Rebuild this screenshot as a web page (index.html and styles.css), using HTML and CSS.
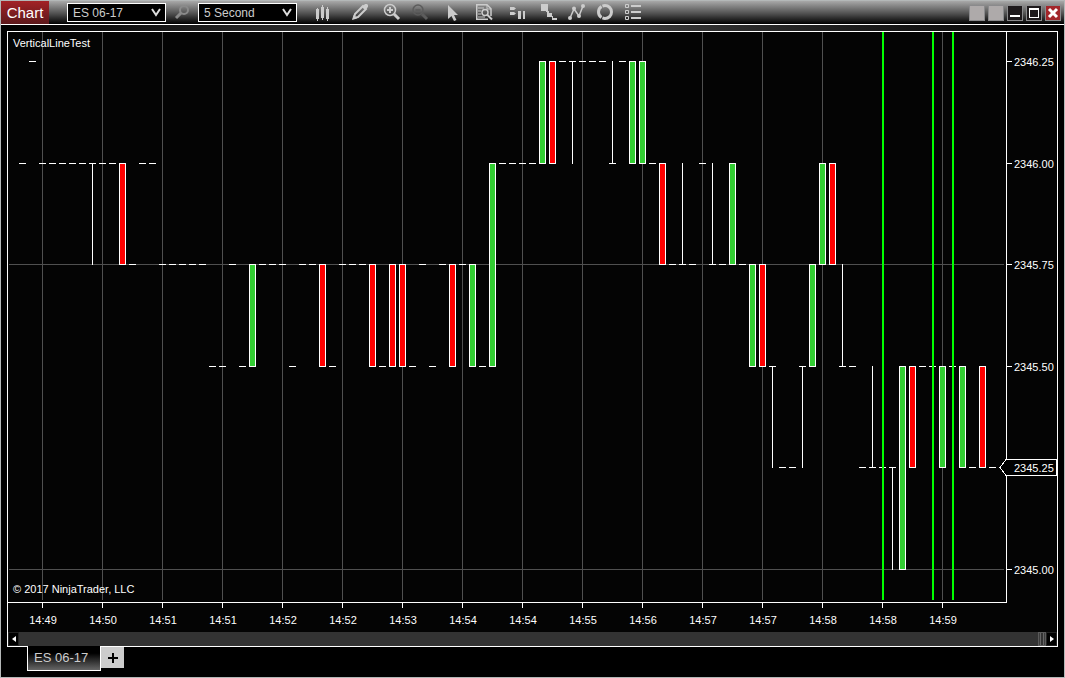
FILE: index.html
```html
<!DOCTYPE html>
<html lang="en">
<head>
    <meta charset="UTF-8">
    <meta name="viewport" content="width=device-width, initial-scale=1.0">
    <title>Chart</title>
    <link rel="stylesheet" href="styles.css">
</head>
<body>
<div class="window">
    <header class="titlebar">
        <h1 class="title">Chart</h1>
        <div class="pickers">
            <div class="picker">
                <select aria-label="Instrument">
                    <option>ES 06-17</option>
                </select>
                <svg class="chevron" viewBox="0 0 10 9"><path d="M1 1l4 6 4-6"/></svg>
            </div>
            <button class="search" aria-label="Search instrument">
                <svg viewBox="0 0 16 15"><circle cx="10" cy="5" r="4"/><path d="M7 8l-5 5" stroke-width="3"/></svg>
            </button>
            <div class="picker">
                <select aria-label="Interval">
                    <option>5 Second</option>
                </select>
                <svg class="chevron" viewBox="0 0 10 9"><path d="M1 1l4 6 4-6"/></svg>
            </div>
        </div>
        <nav class="toolbar">
            <button class="tool tool-style" aria-label="Chart style">
                <svg viewBox="0 0 18 18"><path class="solid" d="M3 6h1V5h1v1h1v10H5v2H4v-2H3zM8 4h1V2h1v2h1v11h-1v2H9v-2H8zM13 6h1V4h1v2h1v10h-1v2h-1v-2h-1z"/></svg>
            </button>
            <button class="tool" aria-label="Drawing tools">
                <svg viewBox="0 0 18 18"><path d="M3 15l1-4 8-8 3 3-8 8z" stroke-width="2"/><path class="solid" d="M1 17l1.500-5 3.500 3.500zM11 4l3-3h2l1 1v2l-3 3z"/></svg>
            </button>
            <div class="tool-group">
                <button class="tool" aria-label="Zoom in">
                    <svg viewBox="0 0 18 18"><circle cx="7" cy="7" r="5.500"/><path d="M4 7h6M7 4v6" stroke-width="2"/><path d="M11 11l5 5" stroke-width="3"/></svg>
                </button>
                <button class="tool" aria-label="Zoom out" disabled>
                    <svg viewBox="0 0 18 18"><circle cx="7" cy="7" r="5"/><path d="M4.500 7h5"/><path d="M11 11l5 5" stroke-width="3"/></svg>
                </button>
            </div>
            <button class="tool" aria-label="Cursor">
                <svg viewBox="0 0 18 18"><path class="solid" d="M5 2v14l3.500-3 2.500 5 2.500-1-2.500-5h4z"/></svg>
            </button>
            <button class="tool" aria-label="Data box">
                <svg viewBox="0 0 18 18"><path d="M13 16.250H1.750V1.750H12l4 4V13"/><path d="M12 2v4h4M3 5h6M3 8h3M3 11h3M3 14h7" stroke-width="1"/><circle cx="10" cy="9.500" r="3"/><path d="M12 11.500l5 5" stroke-width="2"/></svg>
            </button>
            <button class="tool" aria-label="Chart trader">
                <svg viewBox="0 0 18 18"><path class="solid" d="M3 4h4l2 1.500L7 7H3zM3 9h4l2 1.500L7 12H3zM11 8h3v8h-3zM16 8h2v8h-2z"/></svg>
            </button>
            <div class="tool-group">
                <button class="tool" aria-label="Data series">
                    <svg viewBox="0 0 18 18"><path class="solid" d="M2 1h7v7H2zM10 7v3h3v4H8V9H7V8h3zM14 13v2h4v2h-5v-4z"/></svg>
                </button>
                <button class="tool" aria-label="Indicators">
                    <svg viewBox="0 0 18 18"><path d="M3 15l4-9 5 7 4-10" /><circle class="solid" cx="3" cy="15" r="2"/><circle class="solid" cx="7" cy="5.500" r="2"/><circle class="solid" cx="12" cy="13" r="2"/><circle class="solid" cx="16" cy="3" r="2"/></svg>
                </button>
                <button class="tool" aria-label="Strategies">
                    <svg viewBox="0 0 18 18"><circle cx="10" cy="9" r="6.500" stroke-width="3" stroke-dasharray="12.610 1"/></svg>
                </button>
                <button class="tool" aria-label="Properties">
                    <svg viewBox="0 0 18 18"><path d="M2.500 1.500h3v3h-3zM2.500 7.500h3v3h-3zM2.500 13.500h3v3h-3z" stroke-width="1"/><path d="M8 3h10M8 9h10M8 15h10" stroke-width="2"/></svg>
                </button>
            </div>
        </nav>
        <div class="window-buttons">
            <button class="link-button" aria-label="Instrument link"></button>
            <button class="link-button" aria-label="Interval link"></button>
            <button aria-label="Minimize"><svg viewBox="0 0 14 14"><path class="solid" d="M2 9h10v2H2z"/></svg></button>
            <button aria-label="Maximize"><svg viewBox="0 0 14 14"><path class="solid" fill-rule="evenodd" d="M2 2h10v10H2zM3 4v7h8V4z"/></svg></button>
            <button class="close-button" aria-label="Close"><svg viewBox="0 0 14 14"><path d="M3 3l8 8M11 3l-8 8" stroke-width="3"/></svg></button>
        </div>
    </header>

    <main class="workspace">
        <section class="panel">
            <div class="chart-area">
                <svg id="chart" role="img" aria-label="ES 06-17, 5 Second"></svg>
            </div>
            <div class="scrollbar">
                <button aria-label="Scroll left"><svg viewBox="0 0 9 12"><path d="M7 3v6L3 6z"/></svg></button>
                <input type="range" min="0" max="100" value="100" aria-label="Chart position">
                <button aria-label="Scroll right"><svg viewBox="0 0 9 12"><path d="M3 3v6l4-3z"/></svg></button>
            </div>
        </section>
        <div class="tabs">
            <button class="tab">ES 06-17</button>
            <button class="add-tab" aria-label="Add tab"><svg viewBox="0 0 11 11"><path d="M5 1h2v4h4v2H7v4H5V7H1V5h4z"/></svg></button>
        </div>
    </main>
</div>
<script src="chart.js"></script>
</body>
</html>
```
FILE: styles.css
```css
* {
    box-sizing: border-box;
}
body {
    margin: 0;
    background: #000;
    font-family: "Liberation Sans", Arial, sans-serif;
    font-size: 12px;
    color: #fff;
}
button {
    padding: 0;
    border: none;
    background: none;
    color: inherit;
    font: inherit;
}
svg {
    display: block;
}
.window {
    display: flex;
    flex-direction: column;
    height: 100vh;
    border: 1px solid #b4b8b8;
}

/* title bar */
.titlebar {
    display: flex;
    align-items: center;
    height: 24px;
    border-bottom: 1px solid #fff;
    background: linear-gradient(#a8a8a8, #505050 55%, #000);
}
.title {
    align-self: stretch;
    width: 48px;
    margin: 0;
    background: linear-gradient(#a32226, #5c181b);
    font-size: 15px;
    font-weight: normal;
    line-height: 23px;
    text-align: center;
}
.pickers {
    display: flex;
    align-items: center;
    gap: 8px;
    margin-left: 18px;
}
.picker {
    display: grid;
    align-items: center;
}
.picker select {
    grid-area: 1 / 1;
    width: 99px;
    height: 19px;
    padding: 0 5px;
    border: 1px solid #fff;
    border-radius: 0;
    background: #000;
    color: #ccc;
    font: inherit;
    appearance: none;
}
.chevron {
    grid-area: 1 / 1;
    justify-self: end;
    width: 10px;
    height: 9px;
    margin-right: 5px;
    fill: none;
    stroke: #ddd;
    stroke-width: 2;
    pointer-events: none;
}
.search svg {
    width: 16px;
    height: 15px;
    fill: none;
    stroke: #8a8a8a;
    stroke-width: 2;
}
.toolbar {
    display: flex;
    gap: 14px;
    margin: 0 0 1px 16px;
}
.tool-group {
    display: flex;
    gap: 10px;
}
.tool-style {
    margin-right: 6px;
}
.tool svg {
    width: 18px;
    height: 18px;
    fill: none;
    stroke: #ccc;
    stroke-width: 1.5;
}
.tool .solid {
    fill: #ccc;
    stroke: none;
}
.tool:disabled svg {
    stroke: #5c5c5c;
}
.window-buttons {
    display: flex;
    gap: 3px;
    margin-left: auto;
    padding: 1px 3px 0 0;
}
.window-buttons button {
    width: 16px;
    height: 16px;
    border: 1px solid #8a8a8c;
    background: #1e1a1c;
}
.window-buttons svg {
    width: 14px;
    height: 14px;
    fill: #fff;
    stroke: #fff;
}
.window-buttons .solid {
    stroke: none;
}
.window-buttons .link-button {
    background: #aeaaaa;
}
.window-buttons .close-button {
    background: #a3262a;
}

/* chart panel */
.workspace {
    flex: 1;
    display: flex;
    flex-direction: column;
    min-height: 0;
    padding: 6px 6px 0;
    background: linear-gradient(to right, #000, #4a4a4a 48%, #000) no-repeat 0 0 / 100% 6px;
}
.panel {
    flex: 1;
    display: flex;
    flex-direction: column;
    min-height: 0;
    border: 1px solid #fff;
    background: #040404;
}
.chart-area {
    flex: 1;
    min-height: 0;
}
#chart {
    width: 100%;
    height: 100%;
    font-size: 11px;
    shape-rendering: crispEdges;
}
#chart text {
    fill: #fff;
}
.time-label {
    text-anchor: middle;
}
.grid {
    fill: #505050;
}
.white {
    fill: #fff;
}
.up {
    fill: #32cd32;
    stroke: #fff;
}
.down {
    fill: #f00;
    stroke: #fff;
}
.marker-line {
    fill: #0f0;
}
.last-price {
    fill: #000;
    stroke: #fff;
}
.scrollbar {
    display: flex;
    height: 14px;
    background: #333;
}
.scrollbar button {
    width: 11px;
    border: 1px solid #222;
    background: #000;
}
.scrollbar svg {
    width: 9px;
    height: 12px;
    fill: #fff;
}
.scrollbar input {
    flex: 1;
    min-width: 0;
    height: 14px;
    margin: 0;
    background: #333;
    appearance: none;
}
.scrollbar input::-webkit-slider-thumb {
    width: 8px;
    height: 14px;
    border: 1px solid #5a5a5a;
    background: linear-gradient(to right, #3c3c3c 1px, #666 1px 2px, #333 2px 4px, #666 4px 5px, #3c3c3c 5px);
    appearance: none;
}

/* tabs */
.tabs {
    display: flex;
    align-items: flex-start;
    height: 31px;
    margin-top: -1px;
    padding-left: 20px;
}
.tab {
    width: 74px;
    height: 25px;
    padding: 0 0 2px 6px;
    border: 1px solid #fff;
    border-top: none;
    background: linear-gradient(#000 30%, #666);
    color: #ccc;
    font-size: 13px;
    text-align: left;
}
.add-tab {
    width: 23px;
    height: 21px;
    margin-top: 1px;
    background: #ccc;
}
.add-tab svg {
    width: 11px;
    height: 11px;
    margin: 0 auto;
    fill: #000;
}
```
FILE: chart.js
```js
var svg = document.getElementById("chart");

var TICK = 0.25;
var BASE = 2345;
var STEP = 10;       // pixels between bars
var AXIS_WIDTH = 51;
var AXIS_HEIGHT = 30;

// [open, close, other end of the wick], in ticks above BASE
var bars = [
    [4], [5], [4], [4], [4], [4], [4], [4, 4, 3], [4], [4],
    [4, 3], [3], [4], [4], [3], [3], [3], [3], [3], [2],
    [2], [3], [2], [2, 3], [3], [3], [3], [2], [3], [3],
    [3, 2], [2], [3], [3], [3], [3, 2], [2], [3, 2], [3, 2], [2],
    [3], [2], [3], [3, 2], [3], [2, 3], [2], [2, 4], [4], [4],
    [4], [4], [4, 5], [5, 4], [5], [5, 5, 4], [5], [5], [5], [4, 4, 5],
    [5], [4, 5], [4, 5], [4], [4, 3], [3], [3, 3, 4], [3], [4], [3, 3, 4],
    [3], [3, 4], [3], [2, 3], [3, 2], [2, 2, 1], [1], [1], [2, 2, 1], [2, 3],
    [3, 4], [4, 3], [2, 2, 3], [2], [1], [1, 1, 2], [1], [1, 1, 0], [0, 2], [2, 1],
    [2], [2], [1, 2], [2], [1, 2], [1], [2, 1], [1]
];

// grid line every 6 bars, starting with the third one
var times = ["14:49", "14:50", "14:51", "14:51", "14:52", "14:52", "14:53", "14:54",
    "14:54", "14:55", "14:56", "14:57", "14:57", "14:58", "14:58", "14:59"];
var verticalLines = [86, 91, 93];

function add(name, attrs, text) {
    var el = document.createElementNS("http://www.w3.org/2000/svg", name);
    for (var key in attrs) {
        el.setAttribute(key, attrs[key]);
    }
    if (text) {
        el.textContent = text;
    }
    svg.appendChild(el);
}

function rect(cls, x, y, width, height) {
    add("rect", { "class": cls, x: x, y: y, width: width, height: height });
}

function draw() {
    var width = svg.parentNode.clientWidth;
    var height = svg.parentNode.clientHeight;
    var plotWidth = width - AXIS_WIDTH;
    var plotHeight = height - AXIS_HEIGHT;

    function yOf(level) {
        return Math.round(29 + (5 - level) * (plotHeight - 62) / 5);
    }
    function xOf(index) {
        return plotWidth - 14 - (bars.length - 1 - index) * STEP;
    }

    svg.textContent = "";

    rect("grid", 1, yOf(3), plotWidth - 3, 1);
    rect("grid", 1, yOf(0), plotWidth - 3, 1);
    times.forEach(function (time, i) {
        var x = xOf(2 + i * 6);
        rect("grid", x, 0, 1, plotHeight - 2);
        rect("white", x, plotHeight + 1, 1, 5);
        add("text", { "class": "time-label", x: x + 1, y: plotHeight + 22 }, time);
    });

    bars.forEach(function (bar, i) {
        var x = xOf(i);
        var open = bar[0];
        var close = bar.length > 1 ? bar[1] : open;
        var top = yOf(Math.max(open, close));
        var bottom = yOf(Math.min(open, close));
        if (bar.length > 2) {
            var end = yOf(bar[2]);
            rect("white", x, Math.min(top, end), 1, Math.abs(end - top) + 1);
        }
        if (open === close) {
            rect("white", x - 3, top, 7, 1);
        } else {
            add("rect", {
                "class": close > open ? "up" : "down",
                x: x - 2.5, y: top + 0.5, width: 6, height: bottom - top
            });
        }
    });

    verticalLines.forEach(function (index) {
        rect("marker-line", xOf(index), 0, 2, plotHeight - 2);
    });

    // axes
    rect("white", 0, plotHeight, plotWidth + 1, 1);
    rect("white", plotWidth, 0, 1, plotHeight);
    for (var level = 0; level <= 5; level++) {
        var y = yOf(level);
        if (level === 1) {
            add("path", {
                "class": "last-price",
                d: "M" + (plotWidth - 6) + " " + (y + 0.5) + "l6 -8H" + (width - 0.5) + "v16H" + plotWidth + "z"
            });
        } else {
            rect("white", plotWidth + 1, y, 5, 1);
        }
        add("text", { x: plotWidth + 8, y: y + 5 }, (BASE + level * TICK).toFixed(2));
    }

    add("text", { x: 5, y: 15 }, "VerticalLineTest");
    add("text", { x: 5, y: plotHeight - 9 }, "\u00a9 2017 NinjaTrader, LLC");
}

draw();
window.addEventListener("resize", draw);
```
